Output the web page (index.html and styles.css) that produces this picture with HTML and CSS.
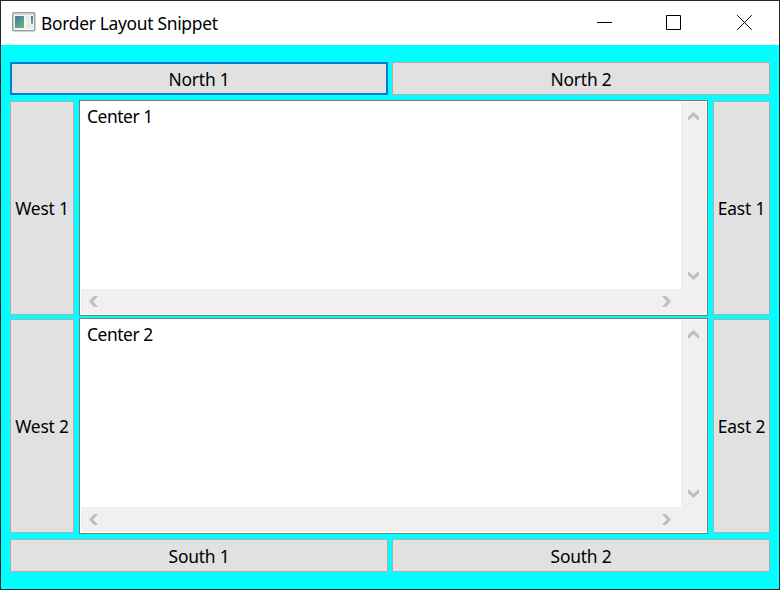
FILE: index.html
```html
<!DOCTYPE html>
<html lang="en">
<head>
<meta charset="utf-8">
<title>Border Layout Snippet</title>
<link rel="stylesheet" href="styles.css">
</head>
<body>
<div class="window">
  <header class="titlebar">
    <svg class="app-icon" width="24" height="20" viewBox="0 0 24 20">
      <defs>
        <linearGradient id="pane" x1="0" y1="0" x2="0.6" y2="1"><stop offset="0" stop-color="#4379a0"/><stop offset="1" stop-color="#62b086"/></linearGradient>
        <linearGradient id="strip" x1="0" y1="0" x2="0" y2="1"><stop offset="0" stop-color="#3e6f9c"/><stop offset="1" stop-color="#67b48b"/></linearGradient>
      </defs>
      <rect x="0.75" y="0.75" width="22" height="18" rx="1.2" fill="#f5f5f6" stroke="#9a9da2" stroke-width="1.5"/>
      <path d="M2 2.5H22" stroke="#d3d5d8"/>
      <rect x="3" y="4" width="9" height="12" fill="url(#pane)"/>
      <rect x="14" y="4" width="4" height="7" fill="#e9e9ea"/>
      <rect x="14" y="12" width="7" height="4" fill="#e9e9ea"/>
      <rect x="19" y="4" width="2" height="8" fill="url(#strip)"/>
    </svg>
    <h1 class="title">Border Layout Snippet</h1>
    <div class="controls">
      <svg width="15" height="15" viewBox="0 0 15 15"><path d="M0 7.5H15"/></svg>
      <svg width="15" height="15" viewBox="0 0 15 15"><path d="M.5 .5H14.5V14.5H.5Z"/></svg>
      <svg width="15" height="15" viewBox="0 0 15 15"><path d="M.2 .2L14.8 14.8M14.8 .2L.2 14.8"/></svg>
    </div>
  </header>
  <main class="content">
    <div class="row">
      <button class="btn focused">North 1</button>
      <button class="btn">North 2</button>
    </div>
    <div class="middle">
      <div class="side">
        <button class="btn">West 1</button>
        <button class="btn">West 2</button>
      </div>
      <div class="center">
        <div class="textbox">
          <div class="text">Center 1</div>
          <div class="vbar">
            <svg width="11" height="9" viewBox="0 0 11 9"><path d="M0 5L5.5 0L11 5V9L5.5 4.2L0 9Z"/></svg>
            <svg width="11" height="9" viewBox="0 0 11 9"><path d="M0 0L5.5 4.8L11 0V4L5.5 9L0 4Z"/></svg>
          </div>
          <div class="hbar">
            <svg width="9" height="11" viewBox="0 0 9 11"><path d="M5 0L0 5.5L5 11H9L4.2 5.5L9 0Z"/></svg>
            <svg width="9" height="11" viewBox="0 0 9 11"><path d="M0 0L4.8 5.5L0 11H4L9 5.5L4 0Z"/></svg>
          </div>
        </div>
        <div class="textbox">
          <div class="text">Center 2</div>
          <div class="vbar">
            <svg width="11" height="9" viewBox="0 0 11 9"><path d="M0 5L5.5 0L11 5V9L5.5 4.2L0 9Z"/></svg>
            <svg width="11" height="9" viewBox="0 0 11 9"><path d="M0 0L5.5 4.8L11 0V4L5.5 9L0 4Z"/></svg>
          </div>
          <div class="hbar">
            <svg width="9" height="11" viewBox="0 0 9 11"><path d="M5 0L0 5.5L5 11H9L4.2 5.5L9 0Z"/></svg>
            <svg width="9" height="11" viewBox="0 0 9 11"><path d="M0 0L4.8 5.5L0 11H4L9 5.5L4 0Z"/></svg>
          </div>
        </div>
      </div>
      <div class="side">
        <button class="btn">East 1</button>
        <button class="btn">East 2</button>
      </div>
    </div>
    <div class="row">
      <button class="btn">South 1</button>
      <button class="btn">South 2</button>
    </div>
  </main>
</div>
</body>
</html>
```
FILE: styles.css
```css
* { box-sizing: border-box; }

body {
  margin: 0;
  font: 17.4px/24px "Noto Sans", "Open Sans", sans-serif;
  letter-spacing: -0.3px;
  color: #000;
}

svg { display: block; flex: none; }

.window {
  width: 780px;
  height: 590px;
  border: 1px solid #262626;
  background: #0ff;
  display: flex;
  flex-direction: column;
}

.titlebar {
  height: 44px;
  background: #fff;
  display: flex;
  align-items: center;
  padding: 0 27px 0 11px;
}

.app-icon { margin-top: -2px; }

.title {
  margin: 0 auto 0 5px;
  font-size: inherit;
  font-weight: 400;
  white-space: nowrap;
}

.controls {
  display: flex;
  gap: 55px;
  margin-top: -1px;
}

.controls svg {
  fill: none;
  stroke: #000;
  stroke-width: 1;
}

.controls svg:nth-child(2) { margin-right: 1px; margin-left: -1px; }

.content {
  padding: 17px 9px 0;
}

.row {
  display: grid;
  grid-template-columns: 1fr 1fr;
  gap: 4px;
  height: 33px;
}

.btn {
  border: 1px solid #adadad;
  border-radius: 0;
  background: #e1e1e1;
  padding: 0;
  font: inherit;
  letter-spacing: -0.2px;
  color: inherit;
  white-space: nowrap;
}

.btn.focused { border: 2px solid #0078d7; }

.middle {
  display: grid;
  grid-template-columns: 64px 629px 57px;
  gap: 5px;
  height: 434px;
  margin: 5px 0;
}

.side {
  display: grid;
  grid-template-rows: 1fr 1fr;
  gap: 4px;
  padding: 1px 0;
}

.center {
  display: grid;
  grid-template-rows: 1fr 1fr;
  gap: 2px;
}

.textbox {
  border: 1px solid #7a7a7a;
  background: #fff;
  padding: 1px;
  display: grid;
  grid-template-columns: 1fr 25px;
  grid-template-rows: 1fr 25px;
}

.text {
  padding: 2px 6px;
  letter-spacing: -0.45px;
}

.vbar,
.hbar {
  background: #f0f0f0;
  display: flex;
  justify-content: space-between;
  align-items: center;
}

.vbar {
  flex-direction: column;
  padding: 10px 0 9px;
}

.hbar {
  grid-column: 1 / 3;
  padding: 0 35px 0 8px;
}

.vbar svg,
.hbar svg { fill: #bfbfbf; }
```
